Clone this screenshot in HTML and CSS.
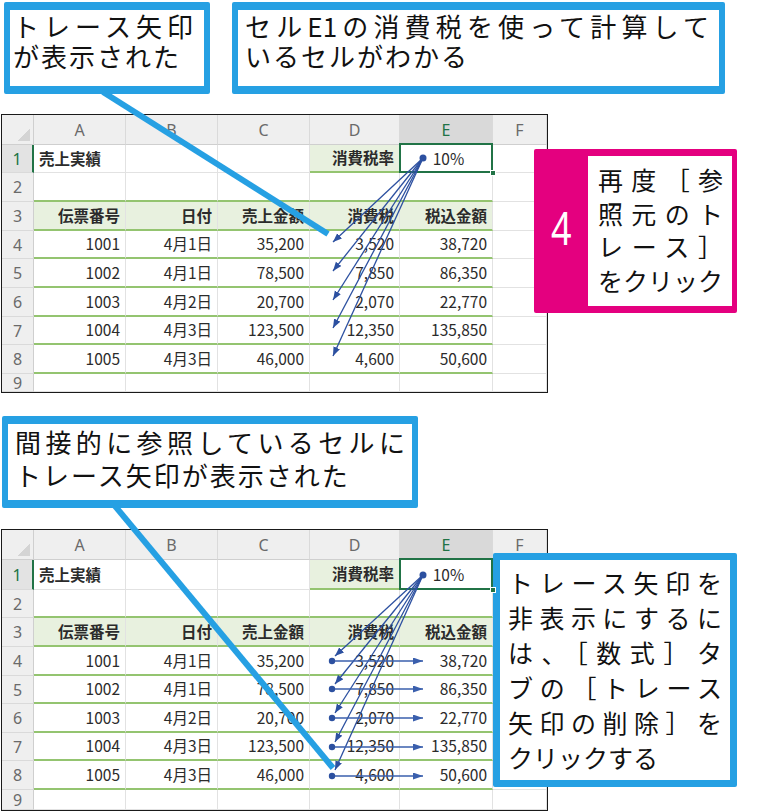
FILE: index.html
```html
<!DOCTYPE html>
<html lang="ja">
<head>
<meta charset="utf-8">
<title>トレース矢印</title>
<link rel="stylesheet" href="styles.css">
</head>
<body>
<div class="page">
  <div class="sheet s1">
    <div class="corner"></div><div class="h">A</div><div class="h">B</div><div class="h">C</div><div class="h">D</div><div class="h hs">E</div><div class="h">F</div>
    <div class="rh rs">1</div><div class="c b">売上実績</div><div class="c"></div><div class="c"></div><div class="c b r g gb">消費税率</div><div class="c ctr sel">10%</div><div class="c"></div>
    <div class="rh">2</div><div class="c gb"></div><div class="c gb"></div><div class="c gb"></div><div class="c gb"></div><div class="c gb"></div><div class="c"></div>
    <div class="rh">3</div><div class="c b r g gb">伝票番号</div><div class="c b r g gb">日付</div><div class="c b r g gb">売上金額</div><div class="c b r g gb">消費税</div><div class="c b r g gb">税込金額</div><div class="c"></div>
    <div class="rh">4</div><div class="c r gb">1001</div><div class="c r gb">4月1日</div><div class="c r gb">35,200</div><div class="c r gb">3,520</div><div class="c r gb">38,720</div><div class="c"></div>
    <div class="rh">5</div><div class="c r gb">1002</div><div class="c r gb">4月1日</div><div class="c r gb">78,500</div><div class="c r gb">7,850</div><div class="c r gb">86,350</div><div class="c"></div>
    <div class="rh">6</div><div class="c r gb">1003</div><div class="c r gb">4月2日</div><div class="c r gb">20,700</div><div class="c r gb">2,070</div><div class="c r gb">22,770</div><div class="c"></div>
    <div class="rh">7</div><div class="c r gb">1004</div><div class="c r gb">4月3日</div><div class="c r gb">123,500</div><div class="c r gb">12,350</div><div class="c r gb">135,850</div><div class="c"></div>
    <div class="rh">8</div><div class="c r gb">1005</div><div class="c r gb">4月3日</div><div class="c r gb">46,000</div><div class="c r gb">4,600</div><div class="c r gb">50,600</div><div class="c"></div>
    <div class="rh">9</div><div class="c"></div><div class="c"></div><div class="c"></div><div class="c"></div><div class="c"></div><div class="c"></div>
  </div>

  <div class="sheet s2">
    <div class="corner"></div><div class="h">A</div><div class="h">B</div><div class="h">C</div><div class="h">D</div><div class="h hs">E</div><div class="h">F</div>
    <div class="rh rs">1</div><div class="c b">売上実績</div><div class="c"></div><div class="c"></div><div class="c b r g gb">消費税率</div><div class="c ctr sel">10%</div><div class="c"></div>
    <div class="rh">2</div><div class="c gb"></div><div class="c gb"></div><div class="c gb"></div><div class="c gb"></div><div class="c gb"></div><div class="c"></div>
    <div class="rh">3</div><div class="c b r g gb">伝票番号</div><div class="c b r g gb">日付</div><div class="c b r g gb">売上金額</div><div class="c b r g gb">消費税</div><div class="c b r g gb">税込金額</div><div class="c"></div>
    <div class="rh">4</div><div class="c r gb">1001</div><div class="c r gb">4月1日</div><div class="c r gb">35,200</div><div class="c r gb">3,520</div><div class="c r gb">38,720</div><div class="c"></div>
    <div class="rh">5</div><div class="c r gb">1002</div><div class="c r gb">4月1日</div><div class="c r gb">78,500</div><div class="c r gb">7,850</div><div class="c r gb">86,350</div><div class="c"></div>
    <div class="rh">6</div><div class="c r gb">1003</div><div class="c r gb">4月2日</div><div class="c r gb">20,700</div><div class="c r gb">2,070</div><div class="c r gb">22,770</div><div class="c"></div>
    <div class="rh">7</div><div class="c r gb">1004</div><div class="c r gb">4月3日</div><div class="c r gb">123,500</div><div class="c r gb">12,350</div><div class="c r gb">135,850</div><div class="c"></div>
    <div class="rh">8</div><div class="c r gb">1005</div><div class="c r gb">4月3日</div><div class="c r gb">46,000</div><div class="c r gb">4,600</div><div class="c r gb">50,600</div><div class="c"></div>
    <div class="rh">9</div><div class="c"></div><div class="c"></div><div class="c"></div><div class="c"></div><div class="c"></div><div class="c"></div>
  </div>

  <svg class="overlay" width="783" height="811" viewBox="0 0 783 811">
    <defs>
      <marker id="ah" markerUnits="userSpaceOnUse" markerWidth="10" markerHeight="8" refX="9" refY="3.5" orient="auto">
        <path d="M0,0 L9,3.5 L0,7 Z" fill="#2c50a0"/>
      </marker>
      <marker id="ah2" markerUnits="userSpaceOnUse" markerWidth="12" markerHeight="8" refX="10" refY="3.5" orient="auto">
        <path d="M0,0 L10,3.5 L0,7 Z" fill="#3a5fad"/>
      </marker>
    </defs>
    <g class="trace">
      <line x1="423" y1="158" x2="333" y2="242" marker-end="url(#ah)"/>
      <line x1="423" y1="158" x2="333" y2="271" marker-end="url(#ah)"/>
      <line x1="423" y1="158" x2="333" y2="300" marker-end="url(#ah)"/>
      <line x1="423" y1="158" x2="333" y2="328" marker-end="url(#ah)"/>
      <line x1="423" y1="158" x2="333" y2="356" marker-end="url(#ah)"/>
      <circle cx="423" cy="158" r="3.5"/>
    </g>
    <g class="trace">
      <line x1="423" y1="575" x2="335" y2="656" marker-end="url(#ah)"/>
      <line x1="423" y1="575" x2="335" y2="684" marker-end="url(#ah)"/>
      <line x1="423" y1="575" x2="335" y2="713" marker-end="url(#ah)"/>
      <line x1="423" y1="575" x2="335" y2="742" marker-end="url(#ah)"/>
      <line x1="423" y1="575" x2="335" y2="770" marker-end="url(#ah)"/>
      <circle cx="423" cy="575" r="3.5"/>
    </g>
    <g class="trace2">
      <line x1="332" y1="661" x2="423" y2="661" marker-end="url(#ah2)"/>
      <line x1="332" y1="689" x2="423" y2="689" marker-end="url(#ah2)"/>
      <line x1="332" y1="718" x2="423" y2="718" marker-end="url(#ah2)"/>
      <line x1="332" y1="747" x2="423" y2="747" marker-end="url(#ah2)"/>
      <line x1="332" y1="776" x2="423" y2="776" marker-end="url(#ah2)"/>
      <circle cx="332" cy="661" r="3.2"/>
      <circle cx="332" cy="689" r="3.2"/>
      <circle cx="332" cy="718" r="3.2"/>
      <circle cx="332" cy="747" r="3.2"/>
      <circle cx="332" cy="776" r="3.2"/>
    </g>
    <g class="pointer">
      <line x1="103" y1="92" x2="328" y2="234"/>
      <line x1="115" y1="506" x2="333" y2="768"/>
    </g>
  </svg>

  <div class="callout c1">
    <span class="ln j">トレース矢印</span>
    <span class="ln">が表示された</span>
  </div>
  <div class="callout c2">
    <span class="ln j">セルE1の消費税を使って計算して</span>
    <span class="ln">いるセルがわかる</span>
  </div>
  <div class="step">
    <div class="num"><span class="digit">4</span></div>
    <div class="stepbody">
      <span class="ln j">再度［参</span>
      <span class="ln j">照元のト</span>
      <span class="ln j">レース］</span>
      <span class="ln j">をクリック</span>
    </div>
  </div>
  <div class="callout c3">
    <span class="ln j">間接的に参照しているセルに</span>
    <span class="ln">トレース矢印が表示された</span>
  </div>
  <div class="callout c5">
    <span class="ln j">トレース矢印を</span>
    <span class="ln j">非表示にするに</span>
    <span class="ln j">は、［数式］タ</span>
    <span class="ln j">ブの［トレース</span>
    <span class="ln j">矢印の削除］を</span>
    <span class="ln">クリックする</span>
  </div>
</div>
</body>
</html>
```
FILE: styles.css
```css
html, body {
  margin: 0;
  padding: 0;
  background: #ffffff;
}

.page {
  position: relative;
  width: 783px;
  height: 811px;
  overflow: hidden;
  box-sizing: border-box;
  padding-top: 114px;
  padding-left: 1px;
  background: #ffffff;
  font-family: "Noto Sans CJK JP", "Noto Sans", sans-serif;
}

/* ---------- spreadsheet ---------- */
.sheet {
  display: grid;
  grid-template-columns: 32px 92px 92px 92px 90px 93px 54px;
  width: 547px;
  box-sizing: border-box;
  border: 1px solid #1a1a1a;
  background: #ffffff;
  overflow: hidden;
  font-size: 15.5px;
  color: #2b2b2b;
}

.s1 {
  grid-template-rows: 30px 28px 29px 29px 28px 29px 29px 28px 29px 18px;
}

.s2 {
  margin-top: 136px;
  grid-template-rows: 30px 30px 28px 29px 29px 28px 29px 28px 29px 20px;
}

.sheet > div {
  box-sizing: border-box;
  display: flex;
  align-items: center;
  overflow: hidden;
  white-space: nowrap;
  line-height: 1;
}

.corner {
  background:
    linear-gradient(to top left, #d4d4d4 0, #d4d4d4 9px, transparent 9px) right 3px bottom 3px / 14px 14px no-repeat,
    #efefef;
  border-right: 1px solid #cfcfcf;
  border-bottom: 1px solid #cfcfcf;
}

.h {
  justify-content: center;
  background: #efefef;
  color: #6a6a6a;
  font-family: "Noto Sans", sans-serif;
  font-size: 16px;
  border-right: 1px solid #dadada;
  border-bottom: 1px solid #cfcfcf;
  padding-top: 1px;
}

.h.hs {
  background: #d9d9d9;
  color: #217346;
  border-bottom: 2px solid #217346;
}

.rh {
  justify-content: center;
  background: #efefef;
  color: #6a6a6a;
  font-family: "Noto Sans", sans-serif;
  font-size: 16px;
  border-right: 1px solid #cfcfcf;
  border-bottom: 1px solid #dadada;
}

.rh.rs {
  background: #e3e3e3;
  color: #217346;
  border-right: 2px solid #217346;
}

.c {
  padding: 0 5px;
  border-right: 1px solid #e2e2e2;
  border-bottom: 1px solid #e2e2e2;
}

.c.b {
  font-weight: 700;
}

.c.r {
  justify-content: flex-end;
}

.c.ctr {
  justify-content: center;
  padding-right: 0;
}

.c.g {
  background: #e8f1df;
}

.c.gb {
  border-bottom: 2px solid #94c470;
}

.c.sel {
  position: relative;
  overflow: visible;
}

.c.sel::after {
  content: "";
  position: absolute;
  top: -2px;
  left: -1px;
  right: -1px;
  bottom: -1px;
  border: 2px solid #217346;
}

.c.sel::before {
  content: "";
  position: absolute;
  right: -4px;
  bottom: -4px;
  width: 6px;
  height: 6px;
  background: #217346;
  border: 1px solid #ffffff;
  box-sizing: border-box;
  z-index: 1;
}

/* ---------- overlay drawing ---------- */
.overlay {
  position: absolute;
  top: 0;
  left: 0;
  pointer-events: none;
}

.trace line {
  stroke: #2c50a0;
  stroke-width: 1.3;
}

.trace circle {
  fill: #2c50a0;
}

.trace2 line {
  stroke: #3a5fad;
  stroke-width: 1.5;
}

.trace2 circle {
  fill: #2c50a0;
}

.pointer line {
  stroke: #26a0e3;
  stroke-width: 6;
}

/* ---------- callouts ---------- */
.callout {
  position: absolute;
  box-sizing: border-box;
  background: #ffffff;
  border: 7px solid #26a0e3;
  border-radius: 2px;
  color: #111111;
  font-size: 26px;
  letter-spacing: 2px;
  line-height: 30px;
}

.ln {
  display: block;
  white-space: nowrap;
}

.ln.j {
  text-align: justify;
  text-align-last: justify;
  letter-spacing: 0;
}

.c1 {
  left: 4px;
  top: 2px;
  width: 206px;
  height: 92px;
  border-width: 8px 6px;
  padding: 1px 11px 0 3px;
}

.c2 {
  left: 232px;
  top: 2px;
  width: 493px;
  height: 92px;
  border-width: 8px 6px;
  padding: 1px 10px 0 7px;
}

.c3 {
  left: 2px;
  top: 416px;
  width: 416px;
  height: 92px;
  border-width: 8px 6px;
  padding: 1px 7px 0 7px;
  line-height: 33px;
}

.c5 {
  left: 493px;
  top: 553px;
  width: 244px;
  height: 234px;
  padding: 5px 8px 0 8px;
  font-size: 25px;
  letter-spacing: 0;
  line-height: 35px;
}

/* ---------- step 4 ---------- */
.step {
  position: absolute;
  left: 534px;
  top: 149px;
  width: 203px;
  height: 164px;
  box-sizing: border-box;
  display: flex;
  background: #e4007f;
  border-radius: 2px;
}

.num {
  width: 54px;
  display: flex;
  align-items: center;
  justify-content: center;
  color: #ffffff;
  font-family: "Noto Sans", sans-serif;
  font-size: 46px;
  padding-bottom: 8px;
  box-sizing: border-box;
}

.digit {
  display: inline-block;
  transform: scaleX(0.78);
}

.stepbody {
  flex: 1;
  margin: 7px 5px 7px 0;
  background: #ffffff;
  box-sizing: border-box;
  padding: 7px 9px 0 10px;
  color: #111111;
  font-size: 25px;
  line-height: 33.5px;
}
```
